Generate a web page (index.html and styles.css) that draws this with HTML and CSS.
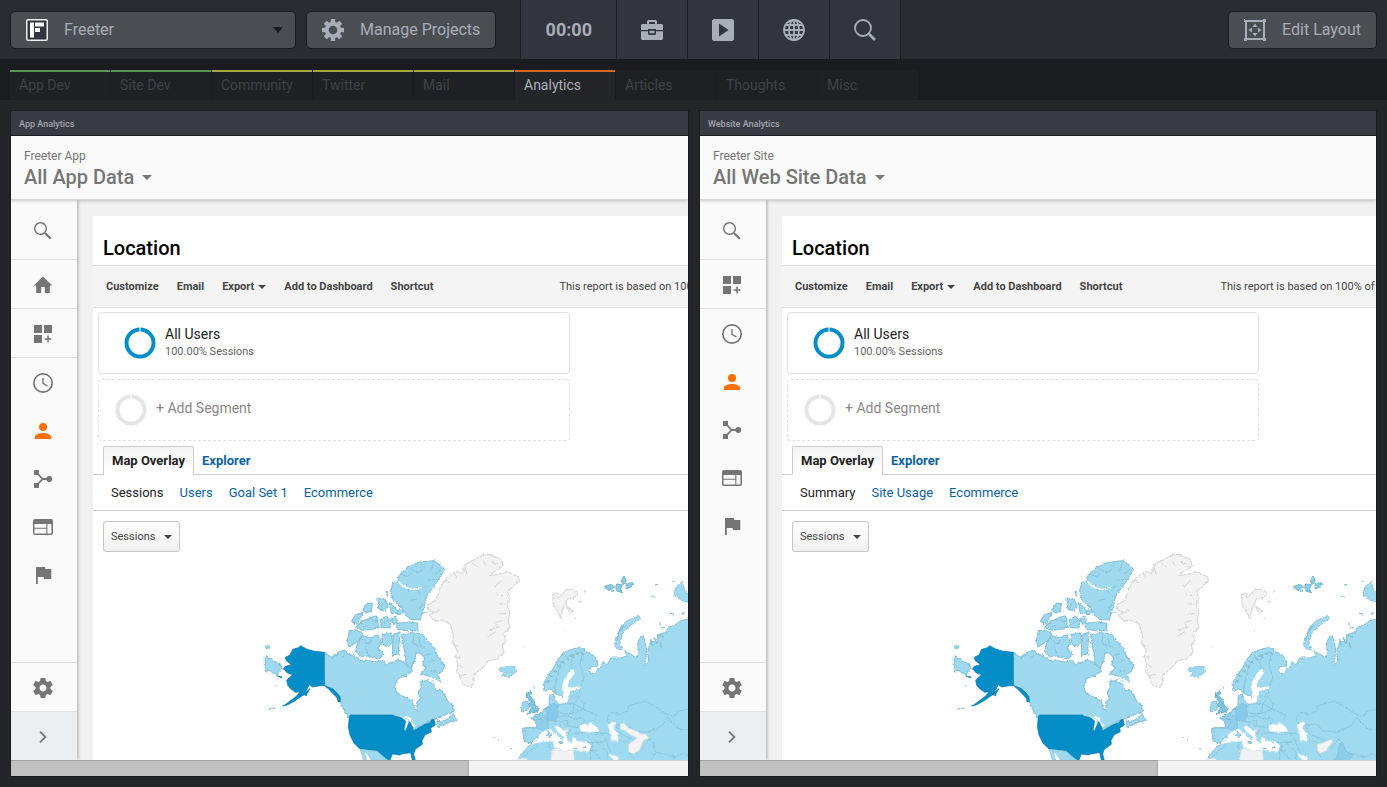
FILE: index.html
```html
<!DOCTYPE html>
<html lang="en">
<head>
<meta charset="utf-8">
<title>Freeter</title>
<link rel="stylesheet" href="styles.css">
</head>
<body>
<svg class="defs" aria-hidden="true">
  <defs>
    <symbol id="i-search" viewBox="0 0 24 24"><path d="M15.5 14h-.79l-.28-.27C15.41 12.59 16 11.11 16 9.5 16 5.91 13.09 3 9.5 3S3 5.91 3 9.5 5.91 16 9.5 16c1.61 0 3.09-.59 4.23-1.57l.27.28v.79l5 4.99L20.49 19l-4.99-5zm-6 .6C6.7 14.600 4.400 12.300 4.400 9.500S6.700 4.400 9.500 4.400 14.600 6.700 14.600 9.500 12.300 14.600 9.500 14.600z"/></symbol>
    <symbol id="i-home" viewBox="0 0 24 24"><path d="M12 3.500 2.700 12.500h2.500V20h5v-6h3.600v6h5v-7.500h2.500z"/></symbol>
    <symbol id="i-apps" viewBox="0 0 24 24"><path d="M3 3h8v8H3zM13 3h8v8h-8zM3 13h8v8H3zM16.300 13.500h1.500v2.700h2.700v1.500h-2.700v2.700h-1.500v-2.700h-2.700v-1.500h2.700z"/></symbol>
    <symbol id="i-clock" viewBox="0 0 24 24"><circle cx="12" cy="12" r="9.200" fill="none" stroke="currentColor" stroke-width="1.700"/><path d="M12 7v5.300l4.500 2.700" fill="none" stroke="currentColor" stroke-width="1.400"/></symbol>
    <symbol id="i-person" viewBox="0 0 24 24"><circle cx="12" cy="8" r="4"/><path d="M12 14c-2.700 0-8.200 1.200-8.200 4v2h16.400v-2c0-2.800-5.500-4-8.200-4z"/></symbol>
    <symbol id="i-flow" viewBox="0 0 24 24"><path d="M3 3h5v5H3zM3 16h5v5H3z"/><circle cx="18.300" cy="12" r="2.900"/><path d="M6.500 6.500 11.500 12l-5 5.500M11.500 12H17" fill="none" stroke="currentColor" stroke-width="1.800"/></symbol>
    <symbol id="i-web" viewBox="0 0 24 24"><path fill-rule="evenodd" d="M4 4h16a2 2 0 0 1 2 2v12a2 2 0 0 1-2 2H4a2 2 0 0 1-2-2V6a2 2 0 0 1 2-2zm-.5 5v3.800h11.800V9zm0 4.800v4.600h11.800v-4.600zM16.400 9v9.400h4V9z"/></symbol>
    <symbol id="i-flag" viewBox="0 0 24 24"><path d="M14.400 6 14 4H5v17h1.800v-7h5.800l.4 2h7.300V6z"/></symbol>
    <symbol id="i-settings" viewBox="0 0 24 24"><path d="M19.430 12.980c.04-.32.07-.64.07-.98s-.03-.66-.07-.98l2.110-1.650c.19-.15.24-.42.12-.64l-2-3.460c-.12-.22-.39-.3-.61-.22l-2.490 1c-.52-.4-1.080-.73-1.690-.98l-.38-2.650C14.460 2.180 14.250 2 14 2h-4c-.25 0-.46.18-.49.42l-.38 2.650c-.61.25-1.170.59-1.690.98l-2.490-1c-.23-.09-.49 0-.61.22l-2 3.460c-.13.22-.07.49.12.64l2.110 1.650c-.04.32-.07.65-.07.98s.03.66.07.98l-2.110 1.650c-.19.15-.24.42-.12.64l2 3.460c.12.22.39.3.61.22l2.490-1c.52.4 1.080.73 1.690.98l.38 2.650c.03.24.24.42.49.42h4c.25 0 .46-.18.49-.42l.38-2.650c.61-.25 1.170-.59 1.690-.98l2.490 1c.23.09.49 0 .61-.22l2-3.460c.12-.22.07-.49-.12-.64l-2.110-1.650zM12 15.500c-1.930 0-3.500-1.570-3.500-3.500s1.570-3.500 3.500-3.500 3.500 1.570 3.500 3.500-1.570 3.500-3.500 3.500z"/></symbol>
    <symbol id="i-chevron" viewBox="0 0 24 24"><path d="m9 6.700 5.400 5.300L9 17.300" fill="none" stroke="currentColor" stroke-width="1.800"/></symbol>
    <symbol id="i-ring" viewBox="0 0 32 32"><circle cx="16" cy="16" r="13.500" fill="none" stroke="currentColor" stroke-width="4"/><path d="M16 0v6" stroke="#fff" stroke-width="1"/></symbol>

    <filter id="coast" x="0" y="0" width="1" height="1" color-interpolation-filters="sRGB">
      <feTurbulence type="fractalNoise" baseFrequency=".13" numOctaves="2" seed="4"/>
      <feDisplacementMap in="SourceGraphic" scale="9" xChannelSelector="R" yChannelSelector="G"/>
    </filter>
    <g id="world">
      <g filter="url(#coast)">
        <path d="M0 0h1300v640H0z" fill="#fff"/>
        <g transform="translate(2 2)">
        <g fill="#9fd9f0" stroke="#89c2d8" stroke-width="3.500" stroke-linejoin="round">
          <path d="M190 306 215 322 222 312 240 302 252 298 262 310 285 318 300 330 320 328 340 334 370 330 372 342 395 335 412 328 432 335 440 345 452 350 455 362 442 370 437 378 425 374 410 386 402 408 408 425 430 438 455 452 462 476 470 477 468 456 479 445 473 425 480 412 482 392 500 390 520 402 527 422 537 416 550 430 560 450 576 465 578 483 560 490 538 497 520 507 500 520 475 530 458 540 450 515 430 508 400 500H275L262 500 240 455 232 440 215 420 190 405z"/>
          <path d="M423 252 450 246 485 250 502 272 522 293 532 320 552 345 545 362 532 370 540 394 515 388 500 374 480 370 497 352 486 342 492 322 480 308 466 305 462 330 450 352 436 340 434 310 428 285z"/>
          <path d="M415 75 440 50 475 35 520 30 552 55 535 85 515 112 498 135 490 170 478 208 450 206 432 190 422 168 398 150 390 122 397 95 412 92z"/>
          <path d="M266 240 288 238 308 250 294 270 265 289 260 272z"/>
          <path d="M290 280 305 255 330 262 352 253 362 275 352 292 369 312 354 325 320 316 300 319 285 302z"/>
          <path d="M364 252 390 247 396 272 382 288 366 280zM400 250 418 245 415 282 413 310 395 314 396 280z"/>
          <path d="M273 212 284 192 307 186 298 208 283 220zM307 177 320 158 335 158 332 183 315 186zM285 230 302 212 325 204 351 212 354 232 328 236 308 239z"/>
          <path d="M352 142 372 147 383 163 375 182 354 174zM386 156 400 165 412 187 392 188zM376 122 382 124 380 136zM358 208 378 197 391 210 388 232 362 230zM392 206 405 194 410 210 400 222zM328 200 347 196 352 209 338 212zM412 178 424 178 426 190 412 192zM408 218 445 214 471 218 470 240 438 240 411 236z"/>
          <path d="M14 317 34 328 58 342 64 352 50 370 34 366 28 358 14 362zM16 285 26 287 24 293 16 293zM530 510 545 515 560 505 577 490 590 510 572 512 545 524 530 530z"/>
        </g>
        <g fill="none" stroke="#7fbed7" stroke-width="2.500">
          <path d="m420 70 20 8 12-10m-2-13 22 12 15-12m-5-12 15 8m20-11-9 22m35-10-18 18m5 16-30 2m4 19-20 4m-48-12 9 26m20-14 14 18m-10 15-20 5m37 10-11 19m5 10 22-4M300 262l22 18 12-10m-12 40-8-23m106-30 14 16m27-21-5 23 17 12m2-25 5 25 15 7m-3 20 21-5m-10 25 22-5m-16 30 19 3M212 318l20-4m20-4-8 12"/>
          <path d="m366 158-4 12m38-8-4 15m-106 25-9 12m31-38 2-10m-28 55 20-3m63-2 13-8m-75 20 15-4m20 8 15-6M458 517l-1 15 15-4 30-15 19-8M240 465l20 25"/>
        </g>
        <path d="M413 92c17 25 50 30 72 17M505 380l28 14M430 498l20 5-2 8-28-10m15 16 4-10-8 34m22-28 8 16" fill="none" stroke="#fff" stroke-width="5"/>
        <g transform="translate(480)">
          <path fill="#f3f3f3" stroke="#d9d9d9" stroke-width="3.500" d="M205 12 240 25 248 45 205 75 245 70 260 62 290 77 297 88 275 110 260 122 268 145 260 160 268 190 262 210 268 230 250 250 255 270 245 285 250 305 230 325 203 330 190 348 160 372 158 400 148 410 128 402 117 375 108 360 112 340 104 320 110 300 95 275 100 260 88 220 65 208 45 212 25 193 46 185 25 180 22 162 48 148 57 112 80 80 110 62 125 70 132 42 165 25 190 12z"/>
          <path fill="none" stroke="#d4d4d4" stroke-width="3" d="m75 85 12 12m13-34 8 20m25-32 6 22m15-38 15 15m20-20 5 15m20-10 18 5m10 50-20 20m26 25-20-5m24 32-18-3m22 30-20 0m10 20-24 7 14 12-30 10m20 5-25 15M98 280l15 8m-8 30 14 2m-7 20 14 10m-10 25 22-4m-94-187 14-5"/>
          <path fill="#f3f3f3" stroke="#d9d9d9" stroke-width="3.500" d="M396 132 410 125 412 140 428 128 432 118 455 115 472 128 460 142 440 145 432 162 425 180 422 203 408 180 398 160zM438 166 457 180 448 188zM490 122l8-2M470 155l14-3M308 290l3 2M433 240h3M462 200h3"/>
          <path fill="#9fd9f0" stroke="#89c2d8" stroke-width="2.500" d="M237 350 250 352 258 348 283 348 288 362 266 380 245 375 250 364 238 362z"/>
          <path fill="#8bcce7" stroke="#78b5cd" stroke-width="3" d="m550 108 20-7 12 8-12 4 10 9-18-4zM588 100l17 2-6 14 9 10-19-4-4-12zM600 90l10-14 7 14-9 12zM616 98l22-2-6 12-15 7zM588 120l20 5M704 102h8M693 137h8M756 92h6M748 188l12 2M718 215v12M782 190h8"/>
          <path fill="#9fd9f0" stroke="#89c2d8" stroke-width="2.500" d="M765 110 785 92 792 120 804 132V155L785 150 760 135zM582 285 585 262 600 230 615 212 655 195 660 202 625 228 605 250 597 275 605 297 590 295z"/>
          <path fill="#a0daf0" stroke="#86c1d7" stroke-width="3" d="M370 395 378 380 400 350 412 325 432 305 455 295 480 290 495 302 520 315 532 335 528 347 510 348 505 362 520 370 535 352 545 345 545 335 560 342 570 322 600 322 620 315 612 300 630 310 645 320 655 310 650 280 657 262 668 255 674 275 678 300 675 330 672 345 684 333 682 300 690 272 712 275 710 252 738 245 742 230 760 225 780 210 810 203V640H285L302 612 320 590 338 576 352 567 348 558 330 578 310 570 305 533 345 530 345 512 330 502 362 486 385 467 386 435 398 430 402 450 412 450 430 440 398 425 390 413 373 422z"/>
          <path fill="#90cfea" stroke="#82bcd3" stroke-width="2" d="m330 502 32-16 18 16 4 30-8 8-30-8-1-20z"/>
          <path fill="#86c9e9" stroke="#82bcd3" stroke-width="2" d="m378 468 18-10 15 4 2 33-10 16-24-3z"/>
          <path fill="#7cc4e3" stroke="#6eb0cb" stroke-width="3" d="M318 425 333 424 329 437 340 450 344 465 356 473 350 483 320 489 332 475 325 465 328 453 317 440z"/>
          <path fill="#9fd9f0" stroke="#89c2d8" stroke-width="3" d="m305 455 15-4 5 12-3 15-20 5zM316 392h2M342 409v5M218 561h4M232 566h3M268 594h5"/>
          <path fill="none" stroke="#8ac5da" stroke-width="2.800" stroke-linejoin="round" d="M400 428 408 380 420 340 440 318 460 310 485 305M408 380 402 410M460 310 450 335 457 356M485 305 478 340 490 380 480 405M478 413 475 440 490 460 488 475 510 485 530 495 520 510M455 420 473 430M445 435 475 440 460 460 488 475M414 462 460 457 456 488 430 490 412 483M456 488 488 475M412 500 440 495 456 503 490 505 480 530M400 512 420 513 440 508 440 525 460 530 477 530M420 513 415 530 445 548 450 535M430 518 440 530M455 550 475 545M470 548 500 543 540 547 555 565 545 575 500 575M540 547 565 550M515 576 515 600 540 625M530 576 560 605 558 630M510 585V630M510 600H530M555 565 570 605M565 522 560 500 575 485 597 492 620 480 625 465 660 455 675 452 700 465 735 490 760 498 775 480 804 475M740 500 725 525 680 545 640 540 620 520 585 522M740 500 775 535 804 537M585 522 600 550 625 560 645 570M590 570 625 575 625 605 640 630M680 560 700 580 705 605 740 612 760 620 785 610 804 612M705 605 690 630M760 620 755 610M312 530 345 533M315 535 313 570M345 575 345 590 320 605 310 620M385 575 390 605M690 560 660 600M520 550 535 555M340 492 355 505 370 508 360 520"/>
          <g fill="#fff" stroke="#fff" stroke-width="2">
            <path d="M455 355 462 368 445 387 440 405 452 412 478 408V413L448 420 445 435 440 455 412 458 408 450 428 440 430 422 425 410 430 390 445 365z"/>
            <path d="M330 580 350 570 358 550 370 542 387 534 397 545 410 553 425 572 432 560 412 543 403 530 410 526 435 545 440 572 455 577 457 560 472 572 500 576 510 585 505 602 480 600 460 596 445 606 425 600 402 592 398 570 360 574z"/>
            <path d="M477 530 487 520 502 524 508 515 525 528 534 541 505 544 482 542zM562 523 582 514 586 522 575 530 590 550 592 570 572 568 572 550zM565 610l28 12-2 6h-14z"/>
          </g>
          <path fill="#9fd9f0" stroke="#7fb9cf" stroke-width="3" d="m382 540 8 12-3 10-6-6zM410 572l16 2-3 7zM458 592l12 2M487 592l10-2"/>
          <path fill="#f3f3f3" stroke="#c8d8de" stroke-width="2" d="m390 640 2-38 13-10 22 10 32-4 3 42zM432 535l12 2-4 8-7-3zM285 640l5-16 28-2 5 15z"/>
          <path fill="none" stroke="#80bed5" stroke-width="4" d="M374 395l14-5m-5-17 14 5m-1-18 14 4m-2-22 14 10m-5-21 15 8m1-20 14 9m4-17 10 10m7-15 8 10m5-12 10 10M690 265l5 20m5-25 10 20m8-6 6 20m-10-40 15 5M588 270l7-25 15-22M720 235l10-4M380 470l-12 8m-20 27 15 2"/>
        </g>
        </g>
      </g>
      <g fill="#058dc7" stroke="#0579ad" stroke-width="2" stroke-linejoin="round">
        <path d="M193 307 178 305 160 303 140 297 122 287 115 293 98 298 90 315 76 322 78 331 94 344 76 349 70 356 82 369 98 374 80 390 83 406 92 416 107 427 120 425 110 438 93 451 83 458 70 468 82 465 104 453 122 440 143 428 150 416 136 427 148 404 158 411 176 408 193 406 204 415 218 430 232 444 234 455 241 455 240 440 232 430 218 416 205 411 194 407z"/>
        <path d="m130 432 12-6-2 12zM50 377l16 4-2 3zM48 407l3 3M26 478l8-3M38 476l7-2M66 468l6-3"/>
        <path d="M271 495H400L405 499 424 503 437 514 432 540 437 542 448 515 457 530 460 543 495 523 512 518 514 510 522 508 526 525 512 534 514 545 495 555 486 572 487 583 466 598 461 612 467 635H458L452 608 428 611 418 615 397 612 388 635 374 627 352 603 300 597 282 580 270 555 265 530 268 500z"/>
      </g>
      <path d="M193.500 308v98" stroke="#3d9fc9" stroke-width="2"/>
      <path d="M300 598 352 604 372 622 385 631H335L322 612 312 603 320 631H311z" fill="#9fd9f0" stroke="#89c2d8" stroke-width="2"/>
    </g>
  </defs>
</svg>

<header class="topbar">
  <label class="project">
    <svg class="project-logo" viewBox="0 0 22 22" aria-label="Project"><rect x=".75" y=".75" width="20.500" height="20.500" rx="1.200" fill="#32353e" stroke="#eee" stroke-width="1.500"/><path d="M4 3.500h4v15H4zM9 3.500h9v4H9zM9 9h5v4H9z" fill="#fff"/></svg>
    <select class="project-select"><option>Freeter</option></select>
    <svg class="project-caret" viewBox="0 0 10 6"><path d="M0 0h10L5 6z"/></svg>
  </label>
  <button class="btn btn-manage">
    <svg class="btn-icon" viewBox="0 0 22 22"><g fill="none" stroke="#a9adb8"><circle cx="11" cy="11" r="6.300" stroke-width="4"/><path stroke-width="4.400" d="M11 0v4M11 18v4M0 11h4M18 11h4M3.300 3.300l2.600 2.600M16.100 16.100l2.600 2.600M18.700 3.300l-2.600 2.600M5.900 16.100l-2.600 2.600"/></g></svg>
    Manage Projects
  </button>
  <div class="tools">
    <button class="tool tool-time">00:00</button>
    <button class="tool" aria-label="Toolbox"><svg viewBox="0 0 22 22"><path fill-rule="evenodd" d="M6 5V2l1-1h8l1 1v3h5l1 1v5h-7v-1H7v1H0V6l1-1zm2 0h6V3H8zM0 12.300h7V15l1 1h6l1-1v-2.700h7V20l-1 1H1l-1-1zm8.500-.6h5v2.600h-5z"/></svg></button>
    <button class="tool" aria-label="Run"><svg viewBox="0 0 22 22"><path fill-rule="evenodd" d="M1.500 0h19L22 1.500v19L20.500 22h-19L0 20.500v-19zM7 4.500v13l9.500-6.500z"/></svg></button>
    <button class="tool" aria-label="Web"><svg viewBox="0 0 22 22"><g fill="none" stroke="currentColor" stroke-width="1.800"><circle cx="11" cy="11" r="10"/><ellipse cx="11" cy="11" rx="5" ry="10"/><path d="M11 1v20M1 11h20M2.500 6h17M2.500 16h17"/></g></svg></button>
    <button class="tool" aria-label="Search"><svg viewBox="0 0 22 22"><circle cx="9" cy="9" r="8" fill="none" stroke="currentColor" stroke-width="1.800"/><path d="m14 14 7 7" stroke="currentColor" stroke-width="2.600"/></svg></button>
  </div>
  <button class="btn btn-edit">
    <svg class="btn-icon" viewBox="0 0 22 22"><path d="M2 2h18v18H2z" fill="none" stroke="#a9adb8" stroke-width="2"/><path fill="#a9adb8" d="M0 1h3V0H1v3H0zM0 0h3v3H0zM19 0h3v3h-3zM0 19h3v3H0zM19 19h3v3h-3zM11 4.500 13.500 8h-5zM11 17.500 13.500 14h-5zM4.500 11 8 8.500v5zM17.500 11 14 8.500v5z"/></svg>
    Edit Layout
  </button>
</header>

<nav class="tabs">
  <a class="tab tab-green" href="#">App Dev</a>
  <a class="tab tab-green" href="#">Site Dev</a>
  <a class="tab tab-yellow" href="#">Community</a>
  <a class="tab tab-yellow" href="#">Twitter</a>
  <a class="tab tab-yellow" href="#">Mail</a>
  <a class="tab tab-active" href="#">Analytics</a>
  <a class="tab" href="#">Articles</a>
  <a class="tab" href="#">Thoughts</a>
  <a class="tab" href="#">Misc</a>
</nav>

<main class="board">
  <section class="widget">
    <h2 class="widget-title">App Analytics</h2>
    <header class="account">
      <div class="account-name">Freeter App</div>
      <button class="account-view">All App Data <span class="caret"></span></button>
    </header>
    <div class="view">
      <nav class="side">
        <a class="side-item side-search" href="#" aria-label="Search"><svg><use href="#i-search"/></svg></a>
        <a class="side-item side-ruled" href="#" aria-label="Home"><svg><use href="#i-home"/></svg></a>
        <a class="side-item side-ruled" href="#" aria-label="Customization"><svg><use href="#i-apps"/></svg></a>
        <div class="side-group">
          <a class="side-item" href="#" aria-label="Real-time"><svg><use href="#i-clock"/></svg></a>
          <a class="side-item side-current" href="#" aria-label="Audience"><svg><use href="#i-person"/></svg></a>
          <a class="side-item" href="#" aria-label="Acquisition"><svg><use href="#i-flow"/></svg></a>
          <a class="side-item" href="#" aria-label="Behavior"><svg><use href="#i-web"/></svg></a>
          <a class="side-item" href="#" aria-label="Conversions"><svg><use href="#i-flag"/></svg></a>
        </div>
        <a class="side-item side-admin" href="#" aria-label="Admin"><svg><use href="#i-settings"/></svg></a>
        <button class="side-item side-expand" aria-label="Expand"><svg><use href="#i-chevron"/></svg></button>
      </nav>
      <div class="page">
        <article class="report">
          <h1 class="report-title">Location</h1>
          <div class="actions">
            <button>Customize</button><button>Email</button><button>Export <span class="caret caret-small"></span></button><button>Add to Dashboard</button><button>Shortcut</button>
            <span class="basis basis-app">This report is based on 100% of sessions</span>
          </div>
          <div class="segments">
            <button class="segment"><svg class="ring ring-blue"><use href="#i-ring"/></svg><span class="segment-text"><span class="segment-name">All Users</span><span class="segment-share">100.00% Sessions</span></span></button>
            <button class="segment segment-add"><svg class="ring"><use href="#i-ring"/></svg><span class="segment-text">+ Add Segment</span></button>
          </div>
          <nav class="modes"><a class="mode mode-on" href="#">Map Overlay</a><a class="mode" href="#">Explorer</a></nav>
          <nav class="sets"><span>Sessions</span><a href="#">Users</a><a href="#">Goal Set 1</a><a href="#">Ecommerce</a></nav>
          <label class="metric"><select aria-label="Metric"><option>Sessions</option></select><span class="caret"></span></label>
          <svg class="map" viewBox="0 6 1284 630" role="img" aria-label="Sessions by country">
            <use href="#world"/>
            <path fill="#f3f3f3" stroke="#cfdade" stroke-width="2" d="m1080 522 13-3 12 15 28 10 8 8h15l11 11-17 10-12 28-18 11-15-7v-23l27-17-20-10-15-12-16-6z"/>
          </svg>
        </article>
      </div>
    </div>
    <div class="scroll"><div class="scroll-thumb"></div></div>
  </section>

  <section class="widget">
    <h2 class="widget-title">Website Analytics</h2>
    <header class="account">
      <div class="account-name">Freeter Site</div>
      <button class="account-view">All Web Site Data <span class="caret"></span></button>
    </header>
    <div class="view">
      <nav class="side">
        <a class="side-item side-search" href="#" aria-label="Search"><svg><use href="#i-search"/></svg></a>
        <a class="side-item side-ruled" href="#" aria-label="Customization"><svg><use href="#i-apps"/></svg></a>
        <div class="side-group">
          <a class="side-item" href="#" aria-label="Real-time"><svg><use href="#i-clock"/></svg></a>
          <a class="side-item side-current" href="#" aria-label="Audience"><svg><use href="#i-person"/></svg></a>
          <a class="side-item" href="#" aria-label="Acquisition"><svg><use href="#i-flow"/></svg></a>
          <a class="side-item" href="#" aria-label="Behavior"><svg><use href="#i-web"/></svg></a>
          <a class="side-item" href="#" aria-label="Conversions"><svg><use href="#i-flag"/></svg></a>
        </div>
        <a class="side-item side-admin" href="#" aria-label="Admin"><svg><use href="#i-settings"/></svg></a>
        <button class="side-item side-expand" aria-label="Expand"><svg><use href="#i-chevron"/></svg></button>
      </nav>
      <div class="page">
        <article class="report">
          <h1 class="report-title">Location</h1>
          <div class="actions">
            <button>Customize</button><button>Email</button><button>Export <span class="caret caret-small"></span></button><button>Add to Dashboard</button><button>Shortcut</button>
            <span class="basis basis-site">This report is based on 100% of sessions</span>
          </div>
          <div class="segments">
            <button class="segment"><svg class="ring ring-blue"><use href="#i-ring"/></svg><span class="segment-text"><span class="segment-name">All Users</span><span class="segment-share">100.00% Sessions</span></span></button>
            <button class="segment segment-add"><svg class="ring"><use href="#i-ring"/></svg><span class="segment-text">+ Add Segment</span></button>
          </div>
          <nav class="modes"><a class="mode mode-on" href="#">Map Overlay</a><a class="mode" href="#">Explorer</a></nav>
          <nav class="sets"><span>Summary</span><a href="#">Site Usage</a><a href="#">Ecommerce</a></nav>
          <label class="metric"><select aria-label="Metric"><option>Sessions</option></select><span class="caret"></span></label>
          <svg class="map" viewBox="0 6 1284 630" role="img" aria-label="Sessions by country">
            <use href="#world"/>
            <path fill="#f3f3f3" stroke="#cfdade" stroke-width="2" d="m1105 582 15-3 28-12 2 12-12 12-6 12-18 7-9-7z"/>
            <path fill="#8bceea" stroke="#7fbbd3" stroke-width="2" d="m1172 580 10 4 10 20 20 10-14 22h-53l18-14z"/>
          </svg>
        </article>
      </div>
    </div>
    <div class="scroll"><div class="scroll-thumb"></div></div>
  </section>
</main>
</body>
</html>
```

FILE: styles.css
```css
* { box-sizing: border-box; }
body {
  margin: 0;
  height: 100vh;
  display: flex;
  flex-direction: column;
  overflow: hidden;
  background: #242529;
  font-family: Roboto, "Liberation Sans", sans-serif;
}
button, select { font: inherit; color: inherit; border: 0; background: none; padding: 0; margin: 0; }
a { color: inherit; text-decoration: none; }
svg { display: block; fill: currentColor; flex: none; }
h1, h2 { margin: 0; }
.defs { position: absolute; width: 0; height: 0; }

.topbar {
  display: flex;
  align-items: center;
  flex: none;
  height: 59px;
  padding: 0 10px;
  background: #292c30;
  color: #a9adb8;
  font-size: 16px;
}
.project, .btn {
  display: flex;
  align-items: center;
  height: 38px;
  border: 1px solid #1b1c1f;
  border-radius: 5px;
  background: #4a4d52;
}
.project { width: 286px; padding: 0 14px 0 15px; margin-right: 10px; }
.project-logo { width: 22px; height: 22px; }
.project-select { flex: 1; height: 36px; padding-left: 16px; appearance: none; outline: 0; }
.project-caret { width: 10px; height: 6px; margin-right: -2px; color: #1b1c1f; }
.btn { padding: 0 15px; gap: 16px; white-space: nowrap; }
.btn-manage { margin-right: 24px; }
.btn-edit { margin-left: auto; }
.btn-icon { width: 22px; height: 22px; }
.tools { display: flex; align-self: stretch; border-left: 1px solid #1b1c1f; }
.tool {
  display: flex;
  align-items: center;
  justify-content: center;
  width: 71px;
  border-right: 1px solid #1b1c1f;
  background: #32353e;
  color: #a9adb8;
}
.tool svg { width: 22px; height: 22px; }
.tool-time { width: 96px; font-size: 18px; font-weight: 700; }

.tabs {
  display: flex;
  flex: none;
  gap: 1px;
  height: 41px;
  padding: 11px 10px 0;
  background: #1b1c1f;
}
.tab {
  width: 100px;
  padding: 3px 9px 0;
  border-top: 2px solid #1f2024;
  background: #1f2024;
  color: #3f4146;
  font-size: 14px;
  line-height: 20px;
}
.tab-green { border-top-color: #5a9557; }
.tab-yellow { border-top-color: #a6a541; }
.tab-active { border-top-color: #d7691f; background: #242529; color: #a9adb8; }

.board {
  display: grid;
  grid-template-columns: minmax(0, 679fr) minmax(0, 678fr);
  gap: 10px;
  flex: 1;
  min-height: 0;
  padding: 10px;
}
.widget {
  display: flex;
  flex-direction: column;
  min-height: 0;
  border: 1px solid #1b1c1f;
  background: #fff;
  overflow: hidden;
}
.widget-title {
  flex: none;
  height: 25px;
  padding: 0 8px;
  border-bottom: 1px solid #1b1c1f;
  background: #393b44;
  color: #a1a4ad;
  font-size: 9px;
  font-weight: 500;
  line-height: 26px;
}
.account {
  flex: none;
  height: 64px;
  padding: 12px 13px 0;
  border-bottom: 1px solid #d6d6d6;
  background: #fafafa;
  box-shadow: 0 1px 3px rgba(0, 0, 0, .2);
  color: #757575;
  z-index: 1;
}
.account-name { font-size: 12px; line-height: 16px; }
.account-view { display: flex; align-items: center; gap: 8px; font-size: 20px; font-weight: 500; line-height: 26px; }
.caret { border: 5px solid transparent; border-top-color: currentColor; border-bottom: 0; }
.caret-small { border-width: 4px; border-bottom: 0; }

.view { display: flex; flex: 1; min-height: 0; background: #f1f1f1; }
.side {
  display: flex;
  flex-direction: column;
  flex: none;
  width: 66px;
  background: #fafafa;
  box-shadow: 1px 0 3px rgba(0, 0, 0, .3);
  color: #757575;
}
.side-item { display: flex; align-items: center; justify-content: center; flex: none; height: 48px; padding-right: 2px; }
.side-item svg { width: 24px; height: 24px; }
.side-search { height: 60px; padding-top: 2px; border-bottom: 1px solid #e0e0e0; }
.side-ruled { height: 49px; padding-top: 2px; border-bottom: 1px solid #e0e0e0; }
.side-group { flex: 1; padding-top: 1px; }
.side-current { color: #ff6f00; }
.side-admin { height: 50px; padding-top: 2px; border: solid #e0e0e0; border-width: 1px 0; }
.side-expand { padding-top: 2px; background: #ebeff2; }

.page { flex: 1; min-width: 0; padding: 16px 0 0 16px; overflow: hidden; }
.report { height: 100%; overflow: hidden; border-radius: 2px 0 0; background: #fff; color: #222; }
.report-title {
  height: 50px;
  padding: 18px 10px 0;
  border-bottom: 1px solid #e0e0e0;
  color: #000;
  font-size: 20px;
  font-weight: 500;
  line-height: 28px;
}
.actions {
  display: flex;
  align-items: center;
  gap: 18px;
  height: 42px;
  padding-left: 13px;
  border-bottom: 1px solid #e0e0e0;
  background: #f4f4f4;
  color: #444;
  font-size: 11px;
  font-weight: 700;
  white-space: nowrap;
}
.actions button { display: flex; align-items: center; gap: 4px; flex: none; }
.basis { font-weight: 400; }
.basis-app { margin-left: 108px; }
.basis-site { margin-left: 80px; }

.segments { display: grid; gap: 5px; padding: 4px 5px 5px; }
.segment {
  display: flex;
  align-items: center;
  gap: 9px;
  width: 472px;
  height: 62px;
  padding: 0 0 1px 25px;
  border: 1px solid #e0e0e0;
  border-radius: 4px;
  text-align: left;
}
.segment-add { gap: 9px; padding-left: 16px; border-style: dashed; color: #888; font-size: 14px; }
.segment-add .segment-text { padding-bottom: 4px; }
.segment-name { display: block; font-size: 14px; line-height: 18px; }
.segment-share { display: block; color: #666; font-size: 11px; line-height: 17px; }
.ring { width: 32px; height: 32px; color: #e5e5e5; }
.ring-blue { color: #058dc7; }

.modes { display: flex; height: 29px; padding-left: 10px; border-bottom: 1px solid #ccc; font-size: 13px; font-weight: 700; line-height: 30px; color: #0b62a4; }
.mode { padding: 0 8px; }
.mode-on { height: 29px; border: 1px solid #ccc; border-bottom: 0; border-radius: 2px 2px 0 0; background: linear-gradient(#f4f4f4, #fff); color: #222; line-height: 28px; }
.sets { display: flex; gap: 16px; height: 36px; padding-left: 18px; border-bottom: 1px solid #ccc; font-size: 13px; line-height: 35px; }
.sets a { color: #0b62a4; }
.metric {
  display: flex;
  align-items: center;
  width: 77px;
  height: 31px;
  margin: 10px 0 0 10px;
  padding: 0 7px;
  border: 1px solid #c6c6c6;
  border-radius: 3px;
  background: linear-gradient(#fff, #f1f1f1);
  color: #444;
  font-size: 11px;
}
.metric .caret { border-width: 4px; border-bottom-width: 0; }
.metric select { flex: 1; height: 29px; appearance: none; outline: 0; }
.map { width: 428px; height: 210px; margin-left: 167px; }

.scroll { flex: none; height: 16px; border-top: 1px solid #d0d0d0; background: #f3f3f3; }
.scroll-thumb { width: 67.7%; height: 15px; border-right: 1px solid #a8a8a8; background: #c1c1c1; box-shadow: 0 -1px #a0a0a0; }
```
